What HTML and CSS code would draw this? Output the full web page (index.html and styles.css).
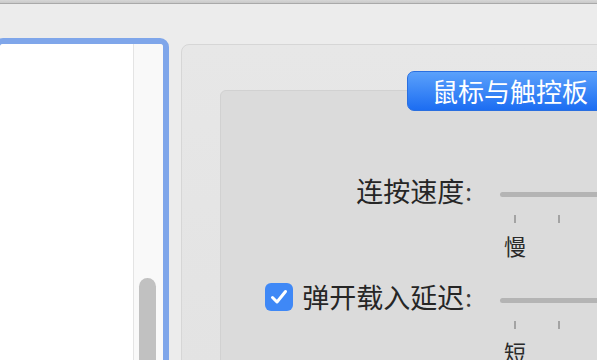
FILE: index.html
```html
<!DOCTYPE html>
<html lang="zh-CN">
<head>
<meta charset="utf-8">
<title>鼠标与触控板</title>
<link rel="stylesheet" href="styles.css">
</head>
<body>
<div class="toolbar-edge"></div>
<div class="main">
  <div class="list-panel">
    <div class="list"></div>
    <div class="scroll-track"><div class="scroll-thumb"></div></div>
  </div>
  <div class="tabbox">
    <div class="tab-row"><div class="tab-btn">鼠标与触控板</div></div>
    <div class="inner">
      <div class="row">
        <div class="label">连按速度<span class="colon">:</span></div>
        <div class="slider">
          <div class="track"></div>
          <div class="ticks"><span class="tick"></span><span class="tick"></span></div>
          <div class="caption">慢</div>
        </div>
      </div>
      <div class="row">
        <div class="label"><span class="checkbox"><svg viewBox="0 0 28 28" width="28" height="28"><path d="M7.5 14.5 L12 19 L20.5 8.5" fill="none" stroke="#fff" stroke-width="3" stroke-linecap="round" stroke-linejoin="round"/></svg></span>弹开载入延迟<span class="colon">:</span></div>
        <div class="slider">
          <div class="track"></div>
          <div class="ticks"><span class="tick"></span><span class="tick"></span></div>
          <div class="caption">短</div>
        </div>
      </div>
    </div>
  </div>
</div>
</body>
</html>
```

FILE: styles.css
```css
html, body {
  margin: 0;
  padding: 0;
}
body {
  width: 597px;
  height: 360px;
  overflow: hidden;
  background: #ececec;
  font-family: "Noto Sans CJK SC", "Noto Sans", sans-serif;
}
.toolbar-edge {
  height: 3px;
  background: linear-gradient(#d6d6d6, #c9c9c9);
  border-bottom: 1px solid #a9a9a9;
}
.main {
  display: flex;
  align-items: flex-start;
  gap: 12px;
  padding-top: 34px;
}
.list-panel {
  flex: none;
  box-sizing: border-box;
  width: 175px;
  height: 400px;
  margin-left: -6px;
  border: 6px solid #7fa6ea;
  border-radius: 9px;
  display: flex;
  overflow: hidden;
}
.list {
  width: 133px;
  background: #ffffff;
  flex: none;
}
.scroll-track {
  flex: 1;
  background: #f9f9f9;
  border-left: 1px solid #e4e4e4;
}
.scroll-thumb {
  margin: 234px 0 0 5px;
  width: 17px;
  height: 200px;
  border-radius: 9px;
  background: #c1c1c1;
}
.tabbox {
  flex: none;
  width: 460px;
  height: 400px;
  margin-top: 6px;
  box-sizing: border-box;
  background: linear-gradient(#e7e7e7, #e2e2e2);
  border: 1px solid #d6d6d6;
  border-radius: 8px;
  padding: 26px 0 0 38px;
}
.tab-row {
  display: flex;
  padding-left: 187px;
  margin-bottom: -21px;
  position: relative;
  z-index: 1;
}
.tab-btn {
  height: 40px;
  box-sizing: border-box;
  padding: 0 12px 0 24px;
  width: 260px;
  border: 1px solid #2a6fe0;
  border-radius: 7px;
  background: linear-gradient(#5ba1fb, #1c6df2);
  color: #ffffff;
  font-size: 26px;
  line-height: 37px;
  white-space: nowrap;
}
.inner {
  height: 400px;
  box-sizing: border-box;
  background: #dbdbdb;
  border: 1px solid #d1d1d1;
  border-radius: 6px;
  padding-top: 83px;
}
.row {
  display: grid;
  grid-template-columns: 251px 1fr;
  column-gap: 28px;
  align-items: start;
  margin-bottom: 22px;
}
.label {
  display: flex;
  justify-content: flex-end;
  align-items: center;
  gap: 9px;
  font-size: 27px;
  line-height: 34px;
  height: 34px;
  color: #262626;
  white-space: nowrap;
}
.colon {
  margin-left: -8px;
  font-size: 24px;
  color: #3a3a3a;
}
.checkbox {
  width: 28px;
  height: 28px;
  border-radius: 6px;
  background: #3f88f6;
  display: flex;
}
.slider {
  padding-top: 18px;
}
.track {
  height: 5px;
  border-radius: 3px;
  background: #b4b4b4;
}
.ticks {
  display: flex;
  gap: 42px;
  margin: 18px 0 0 14px;
  height: 8px;
}
.tick {
  width: 2px;
  height: 8px;
  background: #a3a3a3;
}
.caption {
  margin: 9px 0 0 4px;
  font-size: 22px;
  line-height: 26px;
  color: #2a2a2a;
}
```
